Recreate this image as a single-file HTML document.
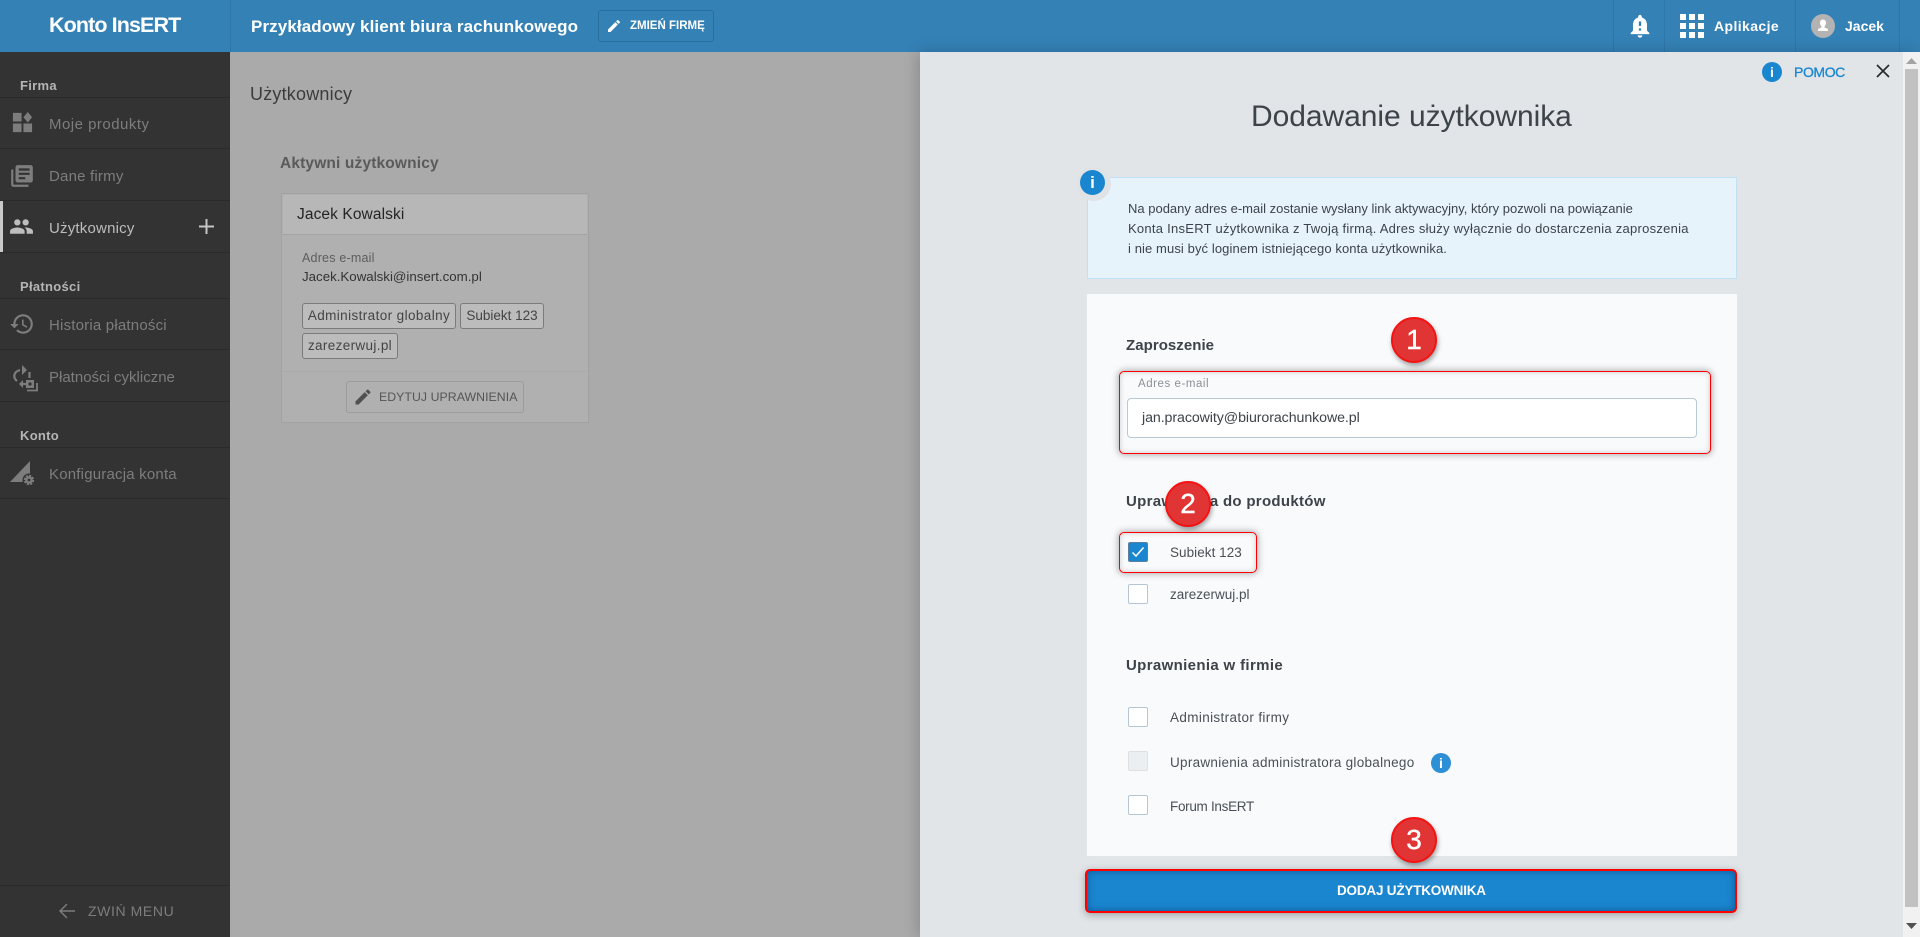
<!DOCTYPE html>
<html lang="pl"><head><meta charset="utf-8"><title>Konto InsERT</title>
<style>
html,body{margin:0;padding:0;width:1920px;height:937px;overflow:hidden;background:#aaa}
body{font-family:"Liberation Sans",Arial,sans-serif;position:relative;color:#3a4248}
.a,.t{position:absolute}
.t{white-space:nowrap;line-height:20px;height:20px}
svg{position:absolute;display:block}
.line{position:absolute;left:0;width:230px;height:1px;background:#2a2a2a}
.sh{color:#b5b5b5;font-weight:bold;font-size:13px;left:20px;letter-spacing:.3px}
.si{color:#7d7d7d;font-size:15px;left:49px;letter-spacing:.2px}
.tag{position:absolute;box-sizing:border-box;height:26px;line-height:24px;border:1px solid #7b7b7b;border-radius:3px;background:#bcbcbc;color:#444;font-size:13.5px;text-align:center;white-space:nowrap}
.cb{position:absolute;left:1128px;width:20px;height:20px;box-sizing:border-box;background:#fff;border:1px solid #b6c6d4;border-radius:2px}
.lb{left:1170px;font-size:13.5px;color:#4a5056;letter-spacing:.15px}
.h{left:1126px;font-size:15px;font-weight:bold;color:#3d4349}
.red{position:absolute;box-sizing:border-box;border:1.5px solid #f00;border-radius:5px;box-shadow:0 0 7px 1px rgba(0,0,0,.3),inset 0 0 6px rgba(0,0,0,.18)}
.bd{position:absolute;width:46px;height:46px;box-sizing:border-box;border:2px solid #f41414;border-radius:50%;background:#e13434;color:#fff;font-size:28px;line-height:41px;text-align:center;box-shadow:1px 3px 5px rgba(0,0,0,.35);-webkit-text-stroke:.4px #fff}
.ic{position:absolute;border-radius:50%;background:#1a86d0;color:#fff;text-align:center;font-weight:bold}
</style></head><body>

<!-- header -->
<div class="a" style="left:0;top:0;width:1920px;height:52px;background:#3481b5"></div>
<div class="a" style="left:230px;top:0;width:1px;height:52px;background:#2d76a8"></div>
<div class="t" style="left:49px;top:15px;font-size:21.5px;font-weight:bold;color:#fff;letter-spacing:-.9px">Konto InsERT</div>
<div class="t" style="left:251px;top:17px;font-size:17px;font-weight:bold;color:#fff;letter-spacing:.11px">Przykładowy klient biura rachunkowego</div>
<div class="a" style="left:598px;top:10px;width:116px;height:32px;box-sizing:border-box;border:1px solid #2a6f9f;border-radius:3px"></div>
<svg style="left:606px;top:18px" width="16" height="16" viewBox="0 0 24 24" fill="#fff"><path d="M3 17.25V21h3.75L17.81 9.94l-3.75-3.75L3 17.25zM20.71 7.04c.39-.39.39-1.02 0-1.41l-2.34-2.34c-.39-.39-1.02-.39-1.41 0l-1.83 1.83 3.75 3.75 1.83-1.83z"/></svg>
<div class="t" style="left:630px;top:16px;font-size:11.5px;font-weight:bold;color:#fff;letter-spacing:0">ZMIEŃ FIRMĘ</div>
<div class="a" style="left:1613px;top:0;width:1px;height:52px;background:#2d76a8"></div>
<div class="a" style="left:1664px;top:0;width:1px;height:52px;background:#2d76a8"></div>
<div class="a" style="left:1795px;top:0;width:1px;height:52px;background:#2d76a8"></div>
<div class="a" style="left:1899px;top:0;width:1px;height:52px;background:#2d76a8"></div>
<svg style="left:1626px;top:12px" width="28" height="28" viewBox="0 0 24 24" fill="#fff"><path d="M18 16v-5c0-3.07-1.63-5.64-4.5-6.32V4c0-.83-.67-1.5-1.5-1.5S10.5 3.17 10.5 4v.68C7.64 5.36 6 7.92 6 11v5l-2 2v1h16v-1l-2-2zm-5 0h-2v-2h2v2zm0-4h-2V8h2v4zm-1 10c1.1 0 2-.9 2-2h-4c0 1.1.9 2 2 2z"/></svg>
<svg style="left:1680px;top:14px" width="24" height="24" viewBox="0 0 24 24" fill="#fff"><path d="M0 0h6v6H0zM9 0h6v6H9zM18 0h6v6h-6zM0 9h6v6H0zM9 9h6v6H9zM18 9h6v6h-6zM0 18h6v6H0zM9 18h6v6H9zM18 18h6v6h-6z"/></svg>
<div class="t" style="left:1714px;top:16px;font-size:14px;font-weight:bold;color:#fff;letter-spacing:.4px">Aplikacje</div>
<svg style="left:1811px;top:14px" width="24" height="24" viewBox="0 0 24 24"><circle cx="12" cy="12" r="12" fill="#b3b3b3"/><path d="M12 5.5c-2 0-3 1.5-3 3.5 0 1.5.7 2.6 1.5 3.3v1.2c-1.5.6-3.5 1-3.5 2.5v1h10v-1c0-1.5-2-1.9-3.5-2.5v-1.2c.8-.7 1.5-1.8 1.500-3.300 0-2-1-3.500-3-3.500z" fill="#fff"/></svg>
<div class="t" style="left:1845px;top:16px;font-size:14px;font-weight:bold;color:#fff">Jacek</div>

<!-- sidebar -->
<div class="a" style="left:0;top:52px;width:230px;height:885px;background:#333"></div>
<div class="line" style="top:97px"></div><div class="line" style="top:148px"></div><div class="line" style="top:200px"></div><div class="line" style="top:252px"></div>
<div class="line" style="top:298px"></div><div class="line" style="top:349px"></div><div class="line" style="top:401px"></div>
<div class="line" style="top:447px"></div><div class="line" style="top:498px"></div><div class="line" style="top:885px"></div>
<div class="a" style="left:0;top:201px;width:3px;height:51px;background:#c9c9c9"></div>
<div class="t sh" style="top:76px">Firma</div>
<div class="t sh" style="top:277px">Płatności</div>
<div class="t sh" style="top:426px">Konto</div>
<svg style="left:11px;top:111px" width="23" height="23" viewBox="0 0 24 24" fill="#7d7d7d"><path d="M2 13v9h9v-9H2zM13 13v9h9v-9h-9zM2 2v9h9V2H2zM17.5 1L13 6.5 17.5 12 22 6.500 17.500 1z"/></svg>
<div class="t si" style="top:115px;letter-spacing:.48px">Moje produkty</div>
<svg style="left:9px;top:163px" width="26" height="26" viewBox="0 0 24 24" fill="#7d7d7d"><path d="M4 6H2v14c0 1.1.9 2 2 2h14v-2H4V6zm16-4H8c-1.1 0-2 .9-2 2v12c0 1.1.9 2 2 2h12c1.1 0 2-.9 2-2V4c0-1.1-.9-2-2-2zm-1 9H9V9h10v2zm-4 4H9v-2h6v2zm4-8H9V5h10v2z"/></svg>
<div class="t si" style="top:167px">Dane firmy</div>
<svg style="left:9px;top:214px" width="25" height="25" viewBox="0 0 24 24" fill="#bdbdbd"><path d="M16 11c1.66 0 2.99-1.34 2.99-3S17.66 5 16 5c-1.66 0-3 1.34-3 3s1.34 3 3 3zm-8 0c1.66 0 2.99-1.34 2.99-3S9.66 5 8 5C6.34 5 5 6.34 5 8s1.34 3 3 3zm0 2c-2.33 0-7 1.17-7 3.5V19h14v-2.5c0-2.33-4.67-3.5-7-3.5zm8 0c-.29 0-.62.02-.97.05 1.16.84 1.97 1.97 1.97 3.45V19h6v-2.5c0-2.33-4.67-3.5-7-3.5z"/></svg>
<div class="t si" style="top:219px;color:#bdbdbd">Użytkownicy</div>
<svg style="left:199px;top:219px" width="15" height="15" viewBox="0 0 15 15" fill="#c4c4c4"><path d="M6.5 0h2v6.5H15v2H8.5V15h-2V8.5H0v-2h6.5z"/></svg>
<svg style="left:9px;top:311px" width="26" height="26" viewBox="0 0 24 24" fill="#7d7d7d"><path d="M13 3c-4.97 0-9 4.03-9 9H1l3.89 3.89.07.14L9 12H6c0-3.87 3.13-7 7-7s7 3.13 7 7-3.13 7-7 7c-1.93 0-3.68-.79-4.94-2.06l-1.42 1.42C8.27 19.99 10.51 21 13 21c4.97 0 9-4.03 9-9s-4.03-9-9-9zm-1 5v5l4.28 2.54.72-1.21-3.5-2.08V8H12z"/></svg>
<div class="t si" style="top:316px">Historia płatności</div>
<svg style="left:12px;top:363px" width="27" height="29" viewBox="0 0 27 29" fill="none" stroke="#7d7d7d" stroke-width="2.2"><path d="M5 18C1 15 1 9 8 7"/><path d="M10 2l5 5-5 5z" fill="#7d7d7d" stroke="none"/><path d="M17.500 9v6"/><path d="M14 21H10"/><path d="M7 21l4-4v8z" fill="#7d7d7d" stroke="none"/><path d="M14 17h8v8h-8z" fill="#7d7d7d" stroke="none"/><circle cx="18" cy="21" r="1.600" fill="#333" stroke="none"/><path d="M25 20v7.500H15" stroke-width="1.800"/></svg>
<div class="t si" style="top:368px;letter-spacing:0">Płatności cykliczne</div>
<svg style="left:10px;top:461px" width="26" height="26" viewBox="0 0 26 26"><path d="M20 0v21H0z" fill="#7d7d7d"/><circle cx="19" cy="19" r="6.500" fill="#333"/><circle cx="19" cy="19" r="3.800" fill="#7d7d7d"/><circle cx="19" cy="19" r="4.300" fill="none" stroke="#7d7d7d" stroke-width="1.800" stroke-dasharray="2.200 1.180"/><circle cx="19" cy="19" r="1.400" fill="#333"/></svg>
<div class="t si" style="top:465px">Konfiguracja konta</div>
<svg style="left:55px;top:899px" width="24" height="24" viewBox="0 0 24 24" fill="#7d7d7d"><path d="M20 11.200H6.800l5.600-5.600L11.400 4.600l-7.400 7.400 7.400 7.400 1-1-5.600-5.600H20v-1.600z"/></svg>
<div class="t" style="left:88px;top:901px;font-size:14px;color:#7d7d7d;letter-spacing:.6px">ZWIŃ MENU</div>

<!-- main dimmed -->
<div class="t" style="left:250px;top:84px;font-size:18px;color:#3c3c3c;letter-spacing:.2px">Użytkownicy</div>
<div class="t" style="left:280px;top:154px;font-size:15.5px;font-weight:bold;color:#5a5a5a;letter-spacing:.15px">Aktywni użytkownicy</div>
<div class="a" style="left:281px;top:193px;width:308px;height:230px;box-sizing:border-box;border:1.5px solid #a2a2a2;background:#b0b0b0"></div>
<div class="a" style="left:283px;top:195px;width:304px;height:39px;background:#b7b7b7;border-bottom:1.5px solid #a2a2a2"></div>
<div class="t" style="left:297px;top:205px;font-size:15.5px;color:#252525;letter-spacing:.1px">Jacek Kowalski</div>
<div class="t" style="left:302px;top:248px;font-size:12.5px;color:#5d5d5d;letter-spacing:.2px">Adres e-mail</div>
<div class="t" style="left:302px;top:267px;font-size:13.3px;color:#333">Jacek.Kowalski@insert.com.pl</div>
<div class="tag" style="left:302px;top:303px;width:154px;letter-spacing:.4px">Administrator globalny</div>
<div class="tag" style="left:460px;top:303px;width:84px">Subiekt 123</div>
<div class="tag" style="left:302px;top:333px;width:96px;letter-spacing:.35px">zarezerwuj.pl</div>
<div class="a" style="left:283px;top:371px;width:304px;height:1px;background:#a9a9a9"></div>
<div class="a" style="left:346px;top:381px;width:178px;height:32px;box-sizing:border-box;border:1px solid #9c9c9c;border-radius:3px"></div>
<svg style="left:353px;top:387px" width="20" height="20" viewBox="0 0 24 24" fill="#505050"><path d="M3 17.25V21h3.75L17.81 9.94l-3.75-3.75L3 17.25zM20.71 7.04c.39-.39.39-1.02 0-1.41l-2.34-2.34c-.39-.39-1.02-.39-1.41 0l-1.83 1.83 3.75 3.75 1.83-1.83z"/></svg>
<div class="t" style="left:379px;top:387px;font-size:12.3px;color:#555;letter-spacing:.05px">EDYTUJ UPRAWNIENIA</div>

<!-- panel -->
<div class="a" style="left:920px;top:52px;width:1000px;height:885px;background:#e1e5e8;box-shadow:-3px 0 14px rgba(0,0,0,.18)"></div>
<div class="a" style="left:1903px;top:52px;width:17px;height:885px;background:#f1f1f1"></div>
<div class="a" style="left:1905px;top:69px;width:13px;height:838px;background:#c1c1c1"></div>
<svg style="left:1906px;top:58px" width="11" height="7"><path d="M5.5 0L11 6H0z" fill="#a3a3a3"/></svg>
<svg style="left:1906px;top:923px" width="11" height="7"><path d="M0 0h11L5.500 6z" fill="#505050"/></svg>
<div class="ic" style="left:1762px;top:62px;width:20px;height:20px;line-height:20px;font-size:14px">i</div>
<div class="t" style="left:1794px;top:62px;font-size:14px;color:#1a86d0;letter-spacing:-.4px;-webkit-text-stroke:.3px #1a86d0">POMOC</div>
<svg style="left:1875px;top:63px" width="16" height="16" viewBox="0 0 16 16" stroke="#2a2a2a" stroke-width="1.7" fill="none"><path d="M2 2l12 12M14 2L2 14"/></svg>
<div class="t" style="left:1251px;top:102px;height:30px;line-height:30px;font-size:30px;color:#3c444a;letter-spacing:-.05px">Dodawanie użytkownika</div>

<div class="a" style="left:1087px;top:177px;width:650px;height:102px;box-sizing:border-box;background:#e6f3fb;border:1px solid #bfe0f5"></div>
<div class="a" style="left:1077px;top:167px;width:34px;height:34px;border-radius:50%;background:#dfe3e6"></div>
<div class="ic" style="left:1080px;top:170px;width:25px;height:25px;line-height:25px;font-size:17px">i</div>
<div class="t" style="left:1128px;top:199px;font-size:13px;color:#3d4349">Na podany adres e-mail zostanie wysłany link aktywacyjny, który pozwoli na powiązanie</div>
<div class="t" style="left:1128px;top:219px;font-size:13px;color:#3d4349;letter-spacing:.26px">Konta InsERT użytkownika z Twoją firmą. Adres służy wyłącznie do dostarczenia zaproszenia</div>
<div class="t" style="left:1128px;top:239px;font-size:13px;color:#3d4349;letter-spacing:.1px">i nie musi być loginem istniejącego konta użytkownika.</div>

<div class="a" style="left:1087px;top:294px;width:650px;height:562px;background:#f9fafc"></div>
<div class="t h" style="top:336px;letter-spacing:.05px">Zaproszenie</div>
<div class="red" style="left:1119px;top:371px;width:592px;height:83px"></div>
<div class="t" style="left:1138px;top:374px;font-size:11.5px;color:#8a9096;letter-spacing:.55px">Adres e-mail</div>
<div class="a" style="left:1127px;top:398px;width:570px;height:40px;box-sizing:border-box;background:#fff;border:1px solid #b8c9d6;border-radius:4px"></div>
<div class="t" style="left:1142px;top:408px;font-size:14.2px;color:#3d4349;letter-spacing:-.08px">jan.pracowity@biurorachunkowe.pl</div>
<div class="bd" style="left:1391px;top:317px">1</div>

<div class="t h" style="top:492px;letter-spacing:.3px">Uprawnienia do produktów</div>
<div class="bd" style="left:1165px;top:481px">2</div>
<div class="red" style="left:1119px;top:532px;width:138px;height:41px"></div>
<div class="cb" style="top:542px;background:#1a86d0;border-color:#5e7f9a"></div>
<svg style="left:1131px;top:546px" width="14" height="12" fill="none" stroke="#fff" stroke-width="1.5"><path d="M1.5 6.500L5 10l7.500-8.500"/></svg>
<div class="t lb" style="top:543px;letter-spacing:.05px">Subiekt 123</div>
<div class="cb" style="top:584px"></div>
<div class="t lb" style="top:585px;letter-spacing:0">zarezerwuj.pl</div>

<div class="t h" style="top:656px;letter-spacing:.35px">Uprawnienia w firmie</div>
<div class="cb" style="top:707px"></div>
<div class="t lb" style="top:708px;letter-spacing:.36px">Administrator firmy</div>
<div class="cb" style="top:751px;background:#eceff1;border-color:#dde1e4"></div>
<div class="t lb" style="top:753px;letter-spacing:.28px">Uprawnienia administratora globalnego</div>
<div class="ic" style="left:1431px;top:753px;width:20px;height:20px;line-height:20px;font-size:14px;background:#2d8fd5">i</div>
<div class="cb" style="top:795px"></div>
<div class="t lb" style="top:797px;letter-spacing:-.3px">Forum InsERT</div>

<div class="a" style="left:1085px;top:869px;width:652px;height:44px;box-sizing:border-box;border:2px solid #f00;border-radius:5px;background:#1a86d0;box-shadow:0 2px 8px rgba(0,0,0,.3),inset 0 0 8px rgba(0,40,90,.5)"></div>
<div class="t" style="left:1337px;top:881px;font-size:13.5px;font-weight:bold;color:#fff;letter-spacing:-.2px">DODAJ UŻYTKOWNIKA</div>
<div class="bd" style="left:1391px;top:817px">3</div>
</body></html>
